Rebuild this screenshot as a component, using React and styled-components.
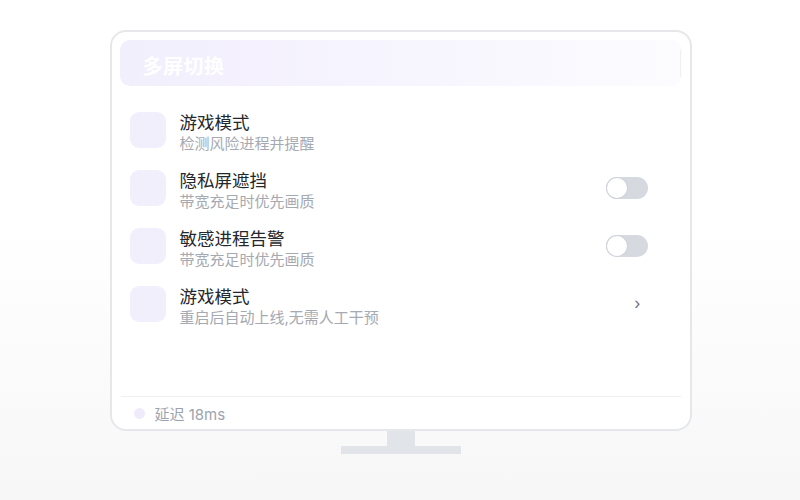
import React from "react";
import styled, { createGlobalStyle } from "styled-components";

const Global = createGlobalStyle`
  html, body { margin: 0; padding: 0; }
  body {
    font-family: "Inter", "Noto Sans CJK SC", "Noto Sans", sans-serif;
    background: linear-gradient(180deg, #ffffff 0%, #ffffff 45%, #f7f7f8 100%);
    min-height: 500px;
  }
  * { box-sizing: border-box; }
`;

const Page = styled.div`
  width: 800px;
  height: 500px;
  display: flex;
  flex-direction: column;
  align-items: center;
  padding-top: 30px;
`;

const Screen = styled.div`
  width: 582px;
  height: 401px;
  margin-left: 1px;
  background: #ffffff;
  border: 2px solid #e5e7eb;
  border-radius: 16px;
  padding: 8px 8px 0;
  display: flex;
  flex-direction: column;
`;

const Header = styled.div`
  position: relative;
  height: 46px;
  flex-shrink: 0;
  border-radius: 10px;
  background: linear-gradient(90deg, #f2effd 0%, #f6f4fe 45%, #fcfcff 100%);
  display: flex;
  align-items: center;
  padding: 4px 0 0 23px;
  color: #ffffff;
  font-size: 20px;
  font-weight: 700;
  letter-spacing: 0.5px;
`;

const HeaderEdge = styled.span`
  position: absolute;
  right: 1px;
  top: 10px;
  bottom: 9px;
  width: 1px;
  background: #eef0f4;
`;

const List = styled.div`
  flex: 1;
  display: flex;
  flex-direction: column;
  margin-top: 15px;
`;

const Row = styled.div`
  height: 58px;
  display: flex;
  align-items: center;
  padding: 0 34px 0 10px;
`;

const IconBox = styled.div`
  width: 36px;
  height: 36px;
  border-radius: 9px;
  background: #f2effd;
  flex-shrink: 0;
`;

const TextBlock = styled.div`
  flex: 1;
  display: flex;
  flex-direction: column;
  margin-left: 14px;
  padding-top: 4px;
`;

const Title = styled.div`
  font-size: 17.5px;
  line-height: 22px;
  color: #24272c;
`;

const Sub = styled.div`
  font-size: 15px;
  line-height: 19px;
  color: #a5a9b1;
`;

const Toggle = styled.div`
  width: 42px;
  height: 22px;
  border-radius: 11px;
  background: #d6d9df;
  position: relative;
  flex-shrink: 0;
`;

const Knob = styled.span`
  position: absolute;
  left: 1px;
  top: 1px;
  width: 20px;
  height: 20px;
  border-radius: 50%;
  background: #ffffff;
  box-shadow: 0 0 0 1px #d0d3d9;
`;

const Chevron = styled.span`
  font-size: 16px;
  line-height: 1;
  color: #6b7280;
  margin-right: 7px;
  margin-top: -2px;
`;

const Footer = styled.div`
  height: 33px;
  flex-shrink: 0;
  border-top: 1px solid #eef0f3;
  margin: 0 1px 0 1px;
  display: flex;
  align-items: center;
  padding-left: 13px;
  gap: 10px;
  font-size: 15px;
  color: #9ca3af;
`;

const Dot = styled.span`
  width: 11px;
  height: 11px;
  border-radius: 50%;
  background: #efebfd;
`;

const Neck = styled.div`
  width: 28px;
  height: 15px;
  background: #e1e4e8;
  margin-left: 2px;
`;

const Base = styled.div`
  width: 120px;
  height: 8px;
  background: #e1e4e8;
  margin-left: 1px;
`;

const rows = [
  { title: "游戏模式", sub: "检测风险进程并提醒", action: null },
  { title: "隐私屏遮挡", sub: "带宽充足时优先画质", action: "toggle" },
  { title: "敏感进程告警", sub: "带宽充足时优先画质", action: "toggle" },
  { title: "游戏模式", sub: "重启后自动上线,无需人工干预", action: "chevron" },
];

export default function App() {
  return (
    <>
      <Global />
      <Page>
        <Screen>
          <Header>
            多屏切换
            <HeaderEdge />
          </Header>
          <List>
            {rows.map((r, i) => (
              <Row key={i}>
                <IconBox />
                <TextBlock>
                  <Title>{r.title}</Title>
                  <Sub>{r.sub}</Sub>
                </TextBlock>
                {r.action === "toggle" && (
                  <Toggle>
                    <Knob />
                  </Toggle>
                )}
                {r.action === "chevron" && <Chevron>›</Chevron>}
              </Row>
            ))}
          </List>
          <Footer>
            <Dot />
            <span>延迟 18ms</span>
          </Footer>
        </Screen>
        <Neck />
        <Base />
      </Page>
    </>
  );
}
